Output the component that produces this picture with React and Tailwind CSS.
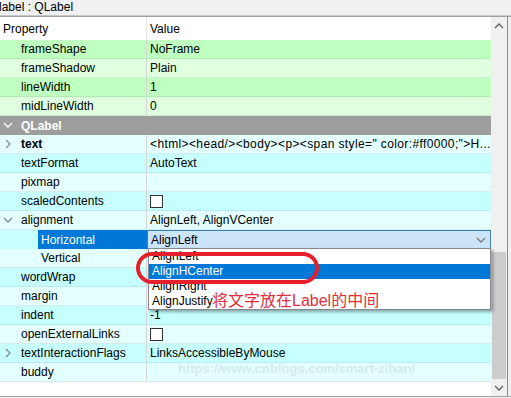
import React from "react";

const GREEN = "bg-[#bfffbf]";
const GREEN_L = "bg-[#dfffdf]";
const CYAN = "bg-[#c7ffff]";
const CYAN_L = "bg-[#e3ffff]";

function Chevron({ dir = "right", className = "" }) {
  const d =
    dir === "right" ? "M3 1 L7 5 L3 9" : dir === "down" ? "M1 3 L5 7 L9 3" : "M1 7 L5 3 L9 7";
  return (
    <svg width="10" height="10" viewBox="0 0 10 10" className={className}>
      <path d={d} fill="none" stroke="currentColor" strokeWidth="1.3" />
    </svg>
  );
}

function CheckBox() {
  return <span className="block w-[13px] h-[13px] border border-[#333] bg-white" />;
}

function Row({ bg, name, value, indent = 21, arrow, bold, children }) {
  return (
    <div className={`flex h-[19px] border-b border-[rgba(0,0,0,0.07)] ${bg}`}>
      <div className="relative w-[147px] shrink-0 flex items-center border-r border-[#d6d6d6]">
        {arrow && (
          <span className="absolute left-[3px] top-[4px] text-[#8a8a8a]">
            <Chevron dir={arrow} />
          </span>
        )}
        <span className={bold ? "font-bold" : ""} style={{ paddingLeft: indent }}>
          {name}
        </span>
      </div>
      <div className="flex-1 flex items-center pl-[3px] whitespace-nowrap overflow-hidden">
        {children || value}
      </div>
    </div>
  );
}

export default function App() {
  return (
    <div
      className="relative w-[511px] h-[398px] overflow-hidden bg-[#f0f0f0] text-[12px] text-black"
      style={{ fontFamily: '"Liberation Sans", Arial, sans-serif' }}
    >
      {/* title */}
      <div className="h-[15px] leading-[15px] -ml-[1px] whitespace-nowrap">label : QLabel</div>
      <div className="h-[2px] border-t border-[#c8c8c8] border-b border-b-[#a0a0a0]" />

      <div className="flex h-[379px]">
        {/* table */}
        <div className="w-[491px] bg-white flex flex-col">
          <div className="flex h-[23px]">
            <div className="w-[147px] flex items-center pl-[3px] border-r border-[#e5e5e5]">Property</div>
            <div className="flex-1 flex items-center pl-[3px]">Value</div>
          </div>

          <Row bg={GREEN} name="frameShape" value="NoFrame" />
          <Row bg={GREEN_L} name="frameShadow" value="Plain" />
          <Row bg={GREEN} name="lineWidth" value="1" />
          <Row bg={GREEN_L} name="midLineWidth" value="0" />

          <div className="relative flex items-center h-[19px] bg-[#9e9e9e] text-white font-bold">
            <span className="absolute left-[3px] top-[4px]">
              <Chevron dir="down" />
            </span>
            <span className="pl-[21px]">QLabel</span>
          </div>

          <Row bg={CYAN_L} name="text" bold arrow="right">
            <span className="tracking-[0.38px]">
              {'<html><head/><body><p><span style=" color:#ff0000;">H...'}
            </span>
          </Row>
          <Row bg={CYAN} name="textFormat" value="AutoText" />
          <Row bg={CYAN_L} name="pixmap" value="" />
          <Row bg={CYAN} name="scaledContents">
            <CheckBox />
          </Row>
          <Row bg={CYAN_L} name="alignment" arrow="down" value="AlignLeft, AlignVCenter" />

          {/* Horizontal (selected, combo) */}
          <div className={`flex h-[19px] ${CYAN}`}>
            <div className="w-[147px] shrink-0 flex pl-[38px]">
              <div className="flex-1 bg-[#0078d7] text-white flex items-center pl-[3px]">Horizontal</div>
            </div>
            <div className="flex-1 flex items-center justify-between border border-[#3c7fb1] bg-[#cce4f7] pl-[3px] pr-[4px]">
              <span>AlignLeft</span>
              <span className="text-[#7a7a7a]">
                <Chevron dir="down" />
              </span>
            </div>
          </div>

          <Row bg={CYAN_L} name="Vertical" indent={41} value="" />
          <Row bg={CYAN} name="wordWrap" value="" />
          <Row bg={CYAN_L} name="margin" value="" />
          <Row bg={CYAN} name="indent" value="-1" />
          <Row bg={CYAN_L} name="openExternalLinks">
            <CheckBox />
          </Row>
          <Row bg={CYAN} name="textInteractionFlags" arrow="right" value="LinksAccessibleByMouse" />
          <Row bg={CYAN_L} name="buddy" value="" />
          <div className="flex-1 bg-white" />
        </div>

        {/* scrollbar */}
        <div className="w-[16px] flex flex-col bg-[#f0f0f0]">
          <div className="h-[17px] flex items-center justify-center text-[#606060]">
            <Chevron dir="up" />
          </div>
          <div className="flex-1 flex flex-col px-[1px]">
            <div className="h-[218px]" />
            <div className="flex-1 bg-[#cdcdcd]" />
          </div>
          <div className="h-[17px] flex items-center justify-center text-[#606060]">
            <Chevron dir="down" />
          </div>
        </div>
        <div className="w-[1px] bg-[#8c8c8c]" />
      </div>
      <div className="h-[1px] bg-[#a0a0a0]" />

      {/* dropdown popup */}
      <div className="absolute left-[148px] top-[248px] w-[343px] h-[62px] bg-white border border-[#828790] shadow-[2px_2px_3px_rgba(0,0,0,0.35)] flex flex-col">
        <div className="h-[15px] leading-[15px] pl-[3px]">AlignLeft</div>
        <div className="h-[15px] leading-[15px] pl-[3px] bg-[#0078d7] text-white">AlignHCenter</div>
        <div className="h-[15px] leading-[15px] pl-[3px]">AlignRight</div>
        <div className="h-[15px] leading-[15px] pl-[3px]">AlignJustify</div>
      </div>

      {/* annotation */}
      <div className="absolute left-[136px] top-[252px] w-[183px] h-[32px] rounded-[16px] border-[4px] border-[#e3202c]" />
      <div
        className="absolute left-[212px] top-[292px] text-[16px] leading-[17px] text-[#e0303a] whitespace-nowrap"
        style={{ fontFamily: '"Liberation Sans", "Noto Sans CJK SC", sans-serif' }}
      >
        将文字放在Label的中间
      </div>
      <div className="absolute left-[178px] top-[359px] text-[13px] font-bold text-[#d6eaea] whitespace-nowrap">
        https://www.cnblogs.com/smart-zihan/
      </div>
    </div>
  );
}
